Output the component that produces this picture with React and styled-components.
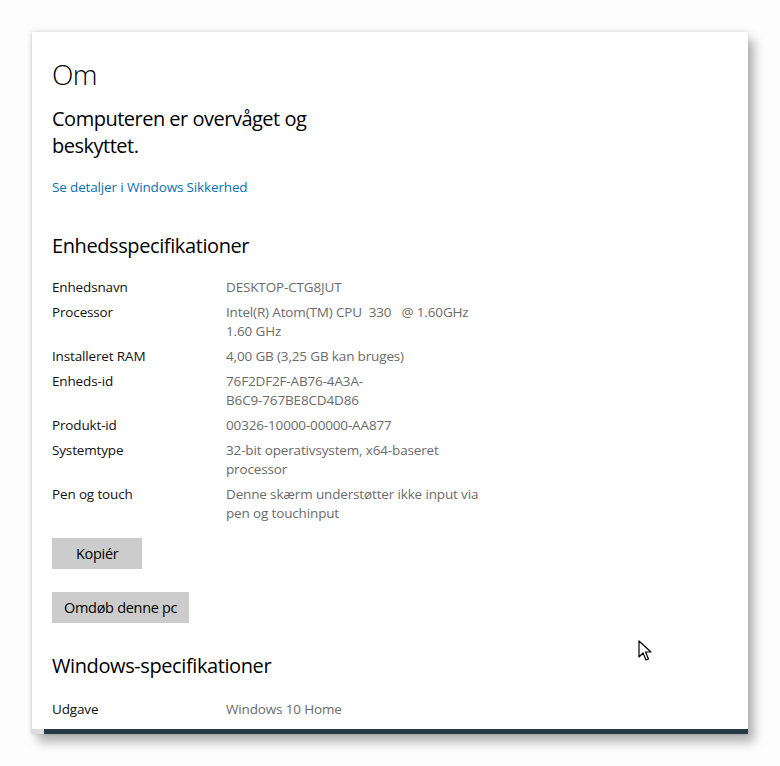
import React from "react";
import styled, { createGlobalStyle } from "styled-components";

const Global = createGlobalStyle`
  html, body { margin: 0; padding: 0; background: #ffffff; }
  body { font-family: "Open Sans", "Noto Sans", sans-serif; color: #000; }
`;

const Stage = styled.div`
  width: 780px;
  height: 766px;
  position: relative;
  overflow: hidden;
  background: #fdfdfd;
  padding: 32px 0 0 32px;
  box-sizing: border-box;
`;

const Window = styled.div`
  width: 716px;
  height: 702px;
  background: #fff;
  display: flex;
  flex-direction: column;
  box-shadow: 6px 8px 10px rgba(0, 0, 0, 0.3), -1px 0 3px rgba(0, 0, 0, 0.12), 0 -2px 8px rgba(0,0,0,0.05);
  overflow: hidden;
`;

const Content = styled.div`
  flex: 1;
  overflow: hidden;
  padding: 22px 0 0 20px;
`;

const PageTitle = styled.h1`
  margin: 0;
  font-size: 28px;
  font-weight: 300;
  line-height: 40px;
  letter-spacing: -0.6px;
`;

const Status = styled.div`
  margin-top: 11px;
  width: 280px;
  font-size: 20px;
  line-height: 27px;
  font-weight: 400;
  letter-spacing: -0.5px;
`;

const Link = styled.a`
  display: block;
  margin-top: 18px;
  font-size: 13.5px;
  line-height: 20px;
  color: #0a6fb4;
  text-decoration: none;
  letter-spacing: -0.15px;
`;

const Section = styled.h2`
  margin: ${(p) => p.$top}px 0 0 0;
  font-size: 20px;
  font-weight: 400;
  line-height: 28px;
  letter-spacing: -0.4px;
`;

const Specs = styled.div`
  margin-top: ${(p) => p.$top}px;
  display: grid;
  grid-template-columns: 174px 256px;
  row-gap: 6px;
  font-size: 13.5px;
  line-height: 19px;
  letter-spacing: -0.15px;
`;

const Label = styled.div`
  color: #111;
`;

const Value = styled.div`
  color: #6b6b6b;
  white-space: pre-wrap;
`;

const Button = styled.button`
  display: block;
  margin-top: ${(p) => p.$top}px;
  height: 31px;
  padding: 0 ${(p) => p.$pad}px;
  border: none;
  background: #cccccc;
  font-family: "Open Sans", "Noto Sans", sans-serif;
  font-size: 14.5px;
  color: #000;
  letter-spacing: -0.3px;
`;

const Footer = styled.div`
  height: 5px;
  display: flex;
  flex-shrink: 0;
`;

const FooterLeft = styled.div`
  width: 12px;
  background: #dcdcdc;
`;

const FooterBar = styled.div`
  flex: 1;
  background: #263844;
`;

const Cursor = styled.svg`
  position: absolute;
  left: 638px;
  top: 640px;
`;

const specs = [
  ["Enhedsnavn", "DESKTOP-CTG8JUT"],
  ["Processor", "Intel(R) Atom(TM) CPU  330   @ 1.60GHz\n1.60 GHz"],
  ["Installeret RAM", "4,00 GB (3,25 GB kan bruges)"],
  ["Enheds-id", "76F2DF2F-AB76-4A3A-\nB6C9-767BE8CD4D86"],
  ["Produkt-id", "00326-10000-00000-AA877"],
  ["Systemtype", "32-bit operativsystem, x64-baseret processor"],
  ["Pen og touch", "Denne skærm understøtter ikke input via pen og touchinput"],
];

export default function App() {
  return (
    <>
      <Global />
      <Stage>
        <Window>
          <Content>
            <PageTitle>Om</PageTitle>
            <Status>Computeren er overvåget og beskyttet.</Status>
            <Link href="#">Se detaljer i Windows Sikkerhed</Link>
            <Section $top={35}>Enhedsspecifikationer</Section>
            <Specs $top={18}>
              {specs.map(([k, v]) => (
                <React.Fragment key={k}>
                  <Label>{k}</Label>
                  <Value>{v}</Value>
                </React.Fragment>
              ))}
            </Specs>
            <Button $top={15} $pad={24}>Kopiér</Button>
            <Button $top={23} $pad={12}>Omdøb denne pc</Button>
            <Section $top={29}>Windows-specifikationer</Section>
            <Specs $top={20}>
              <Label>Udgave</Label>
              <Value>Windows 10 Home</Value>
            </Specs>
          </Content>
          <Footer>
            <FooterLeft />
            <FooterBar />
          </Footer>
        </Window>
        <Cursor width="16" height="22" viewBox="0 0 16 22">
          <path d="M1 1 L1 17 L5 13 L8 20 L10.5 19 L7.5 12 L13 12 Z" fill="#fff" stroke="#000" strokeWidth="1.2" strokeLinejoin="round" />
        </Cursor>
      </Stage>
    </>
  );
}
